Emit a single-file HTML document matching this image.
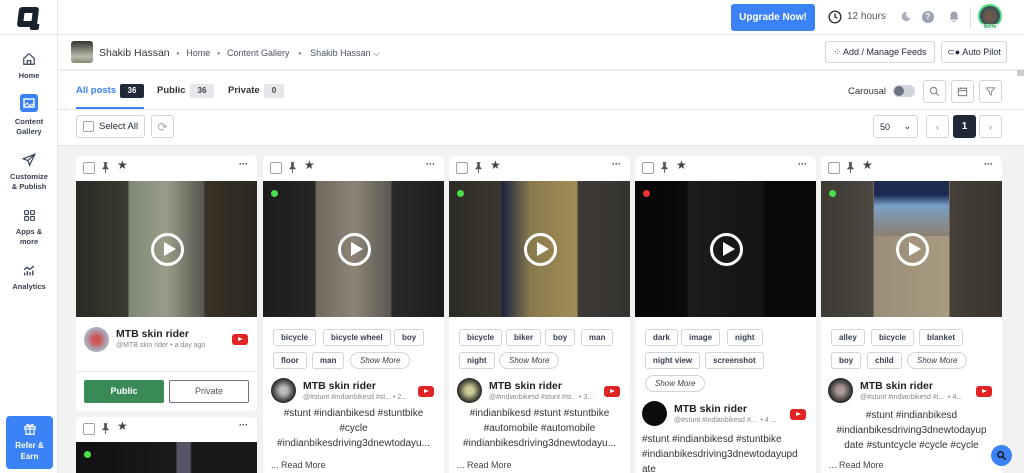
<!DOCTYPE html>
<html><head><meta charset="utf-8"><style>
*{box-sizing:border-box;margin:0;padding:0}
html,body{width:1024px;height:473px;overflow:hidden}
body{font-family:"Liberation Sans",sans-serif;background:#fff;position:relative;color:#1f2937}
.a{position:absolute}
.side{left:0;top:0;width:58px;height:473px;border-right:1px solid #e5e7eb;background:#fff}
.nav{position:absolute;left:0;width:58px;text-align:center;font-size:7.5px;font-weight:bold;color:#374151;line-height:10px}
.nav svg{display:block;margin:0 auto 5px}
.topb{left:58px;top:0;right:0;height:35px;border-bottom:1px solid #e5e7eb}
.crumb{left:58px;top:35px;right:0;height:36px;border-bottom:2px solid #eceef1}
.btn{position:absolute;border:1px solid #d1d5db;border-radius:3px;background:#fff;font-size:9px;display:flex;align-items:center;justify-content:center;color:#1f2937}
.gray{left:58px;top:145px;width:966px;height:328px;overflow:hidden;background:#f2f2f3;border-top:1px solid #e5e7eb}
.card{position:absolute;background:#fff;border-radius:6px;overflow:hidden;width:181px}
.ch{height:25px;position:relative}
.cb{position:absolute;left:7px;top:6px;width:12px;height:12px;border:1px solid #9ca3af;border-radius:2px;background:#fff}
.pin{position:absolute;left:25px;top:6px}
.star{position:absolute;left:41px;top:2px;font-size:12px;color:#444}
.dots{position:absolute;right:9px;top:3px;font-size:9px;font-weight:bold}
.img{position:absolute;left:0;top:25px;width:100%;height:136px;background:#111}
.play{position:absolute;left:50%;top:50%;width:33px;height:33px;margin:-16px 0 0 -16px;border:3px solid #fff;border-radius:50%}
.play:after{content:"";position:absolute;left:10px;top:6px;border-left:12px solid #fff;border-top:7.5px solid transparent;border-bottom:7.5px solid transparent}
.dot{position:absolute;left:8px;top:9px;width:7px;height:7px;border-radius:50%;background:#4ade4a}
.tag{position:absolute;height:17px;border:1px solid #d1d5db;border-radius:3px;font-size:8px;font-weight:bold;color:#374151;display:flex;align-items:center;padding:0 7px}
.sm{border-radius:9px;font-style:italic;font-weight:normal;padding:0 9px}
.av{position:absolute;width:25px;height:25px;border-radius:50%;background:#222}
.nm{position:absolute;font-size:10.5px;font-weight:bold;color:#222}
.sub{position:absolute;font-size:7px;color:#888;white-space:nowrap}
.yt{position:absolute;width:16px;height:11px;background:#e02424;border-radius:3px}
.yt:after{content:"";position:absolute;left:6px;top:3px;border-left:5px solid #fff;border-top:2.5px solid transparent;border-bottom:2.5px solid transparent}
.tx{position:absolute;left:0;width:181px;font-size:10px;color:#333;line-height:15px;text-align:center}
.rm{position:absolute;left:8px;font-size:9px;color:#444}
</style></head><body>
<svg width="0" height="0" style="position:absolute"><defs><symbol id="pn" viewBox="0 0 10 12"><path d="M3 0h4v1H6.5v4L8.5 7v1h-3v4h-1V8h-3V7l2-2V1H3z" fill="#555"/></symbol></defs></svg>

<div class="a side">
 <div class="a" style="left:18px;top:7px;width:20px;height:20px;border:6px solid #1a2230;border-radius:3px;transform:skewX(-7deg)"></div>
 <div class="a" style="left:30px;top:24px;width:9px;height:6px;background:#1a2230;transform:skewX(-7deg);border-radius:0 0 2px 2px"></div>
 <div class="a" style="left:0;top:34px;width:58px;border-top:1px solid #e5e7eb"></div>
 <div class="nav" style="top:52px"><svg width="14" height="14" viewBox="0 0 24 24" fill="none" stroke="#374151" stroke-width="2"><path d="M3 11l9-8 9 8v10H3z M9 21v-6h6v6"/></svg>Home</div>
 <div class="nav" style="top:94px"><svg width="18" height="18" viewBox="0 0 18 18"><rect width="18" height="18" rx="3" fill="#3b82f6"/><rect x="4" y="5" width="10" height="8" fill="none" stroke="#fff" stroke-width="1.4"/><path d="M4 12l3-3 3 3 2-2 2 2" stroke="#fff" fill="none"/></svg>Content<br>Gallery</div>
 <div class="nav" style="top:153px"><svg width="14" height="14" viewBox="0 0 24 24" fill="none" stroke="#374151" stroke-width="2"><path d="M22 2L2 10l8 3 3 8z M10 13l12-11"/></svg>Customize<br>&amp; Publish</div>
 <div class="nav" style="top:209px"><svg width="13" height="13" viewBox="0 0 24 24" fill="none" stroke="#374151" stroke-width="2"><rect x="3" y="3" width="7" height="7" rx="1"/><rect x="14" y="3" width="7" height="7" rx="1"/><rect x="3" y="14" width="7" height="7" rx="1"/><rect x="14" y="14" width="7" height="7" rx="1"/></svg>Apps &amp;<br>more</div>
 <div class="nav" style="top:264px"><svg width="14" height="13" viewBox="0 0 24 24" fill="none" stroke="#374151" stroke-width="2.5"><path d="M4 21v-5M9 21v-8M14 21v-6M19 21v-9M3 11l5-5 5 4 8-6"/></svg>Analytics</div>
 <div class="a" style="left:6px;top:416px;width:47px;height:53px;background:#3b82f6;border-radius:4px;color:#fff;font-size:8px;font-weight:bold;text-align:center;line-height:11px;padding-top:6px">
  <svg width="14" height="14" viewBox="0 0 24 24" fill="none" stroke="#fff" stroke-width="2" style="display:block;margin:0 auto 4px"><rect x="3" y="8" width="18" height="4"/><path d="M5 12v9h14v-9M12 8v13M12 8c-2-5-7-4-5-1 1 1 5 1 5 1zM12 8c2-5 7-4 5-1-1 1-5 1-5 1z"/></svg>Refer &amp;<br>Earn</div>
</div>

<div class="a topb">
 <div class="a" style="left:673px;top:4px;width:84px;height:27px;background:#3b82f6;border-radius:3px;color:#fff;font-size:10px;font-weight:bold;display:flex;align-items:center;justify-content:center">Upgrade Now!</div>
 <svg class="a" style="left:770px;top:10px" width="14" height="14" viewBox="0 0 24 24" fill="none" stroke="#333" stroke-width="2.4"><circle cx="12" cy="12" r="10"/><path d="M12 6v6l4 2"/></svg>
 <div class="a" style="left:789px;top:11px;font-size:10px;color:#555">12 hours</div>
 <svg class="a" style="left:842px;top:11px" width="11" height="11" viewBox="0 0 24 24"><path d="M15 2a10 10 0 1 0 8 14A9 9 0 0 1 15 2z" fill="#aab0bb"/></svg>
 <div class="a" style="left:864px;top:11px;width:12px;height:12px;border-radius:50%;background:#9ca3af;color:#fff;font-size:8px;font-weight:bold;text-align:center;line-height:12px">?</div>
 <svg class="a" style="left:890px;top:10px" width="12" height="13" viewBox="0 0 24 24"><path d="M12 2a7 7 0 0 0-7 7v6l-2 3h18l-2-3V9a7 7 0 0 0-7-7zM9 20a3 3 0 0 0 6 0z" fill="#9ca3af"/></svg>
 <div class="a" style="left:912px;top:7px;height:20px;border-left:1px solid #ddd"></div>
 <div class="a" style="left:920px;top:4px;width:24px;height:24px;border-radius:50%;border:2px solid #4ade80;border-bottom-color:#e5e7eb;background:radial-gradient(#6b5a4a 30%,#3a4a5a 70%)"></div>
 <div class="a" style="left:926px;top:24px;font-size:6px;font-weight:bold;color:#16a34a;background:#fff">60%</div>
</div>

<div class="a crumb">
 <div class="a" style="left:13px;top:6px;width:22px;height:22px;border-radius:3px;background:linear-gradient(#333,#bba 70%,#887)"></div>
 <div class="a" style="left:41px;top:12px;font-size:10.5px;color:#333;white-space:nowrap">Shakib Hassan <span style="color:#666;font-size:8px;margin:0 4px">•</span> <span style="font-size:9px;color:#4b5563">Home</span> <span style="color:#666;font-size:8px;margin:0 4px">•</span> <span style="font-size:9px;color:#4b5563">Content Gallery</span> <span style="color:#666;font-size:8px;margin:0 6px">•</span> <span style="font-size:9px;color:#4b5563">Shakib Hassan ⌵</span></div>
 <div class="btn" style="left:767px;top:6px;width:110px;height:22px">⁘ Add / Manage Feeds</div>
 <div class="btn" style="left:883px;top:6px;width:66px;height:22px">⊂● Auto Pilot</div>
</div>

<div class="a" style="left:76px;top:85px;font-size:9.5px;font-weight:bold;color:#3b82f6">All posts</div>
<div class="a" style="left:120px;top:84px;width:24px;height:14px;background:#1f2937;border-radius:2px;color:#fff;font-size:8px;font-weight:bold;text-align:center;line-height:14px">36</div>
<div class="a" style="left:76px;top:107px;width:68px;height:2px;background:#3b82f6"></div>
<div class="a" style="left:157px;top:85px;font-size:9.5px;font-weight:bold;color:#333">Public</div>
<div class="a" style="left:190px;top:84px;width:24px;height:14px;background:#e5e7eb;border-radius:2px;font-size:8px;font-weight:bold;text-align:center;line-height:14px;color:#444">36</div>
<div class="a" style="left:228px;top:85px;font-size:9.5px;font-weight:bold;color:#333">Private</div>
<div class="a" style="left:264px;top:84px;width:20px;height:14px;background:#e5e7eb;border-radius:2px;font-size:8px;font-weight:bold;text-align:center;line-height:14px;color:#444">0</div>
<div class="a" style="left:58px;top:109px;right:0;border-top:1px solid #e5e7eb"></div>
<div class="a" style="left:848px;top:86px;font-size:9.5px;color:#333">Carousal</div>
<div class="a" style="left:893px;top:85px;width:22px;height:12px;border-radius:6px;background:#d1d5db"><div style="margin:1px;width:10px;height:10px;border-radius:50%;background:#6b7280"></div></div>
<div class="btn" style="left:923px;top:80px;width:23px;height:23px"><svg width="11" height="11" viewBox="0 0 24 24" fill="none" stroke="#888" stroke-width="2.5"><circle cx="10" cy="10" r="7"/><path d="M15 15l6 6"/></svg></div>
<div class="btn" style="left:951px;top:80px;width:23px;height:23px"><svg width="11" height="11" viewBox="0 0 24 24" fill="none" stroke="#888" stroke-width="2.5"><rect x="3" y="5" width="18" height="16"/><path d="M3 10h18M8 3v4M16 3v4"/></svg></div>
<div class="btn" style="left:979px;top:80px;width:23px;height:23px"><svg width="11" height="11" viewBox="0 0 24 24" fill="none" stroke="#888" stroke-width="2"><path d="M3 4h18l-7 9v7l-4-2v-5z"/></svg></div>

<div class="btn" style="left:76px;top:115px;width:69px;height:23px;font-size:9.5px;justify-content:flex-start;padding-left:6px"><span style="width:11px;height:11px;border:1px solid #9ca3af;border-radius:2px;margin-right:5px"></span>Select All</div>
<div class="btn" style="left:151px;top:115px;width:23px;height:23px;color:#aaa;font-size:12px">⟳</div>
<div class="btn" style="left:873px;top:115px;width:45px;height:23px;font-size:9px;justify-content:space-between;padding:0 6px"><span>50</span><span>⌄</span></div>
<div class="btn" style="left:926px;top:115px;width:23px;height:23px;color:#888">‹</div>
<div class="a" style="left:953px;top:115px;width:23px;height:23px;background:#1f2937;border-radius:3px;color:#fff;font-size:10px;font-weight:bold;text-align:center;line-height:23px">1</div>
<div class="btn" style="left:979px;top:115px;width:23px;height:23px;color:#888">›</div>
<div class="a" style="left:1017px;top:70px;width:7px;height:6px;background:#ccc"></div>

<div class="a gray">
<!-- card 1 -->
<div class="card" style="left:18px;top:10px;height:255px">
 <div class="ch"><div class="cb"></div><svg class="pin" width="9" height="11"><use href="#pn"/></svg><span class="star">★</span><span class="dots">···</span></div>
 <div class="img" style="background:linear-gradient(90deg,#2a2a24 0,#3b3a30 29%,#7d8a72 29%,#9a9c8a 50%,#55554c 71%,#3a3226 71%,#2a2820 100%)"><div class="play"></div></div>
 <div class="av" style="left:8px;top:171px;background:radial-gradient(#c55 20%,#aab 60%)"></div>
 <div class="nm" style="left:40px;top:172px">MTB skin rider</div>
 <div class="sub" style="left:40px;top:186px">@MTB skin rider • a day ago</div>
 <div class="yt" style="left:156px;top:178px"></div>
 <div class="a" style="left:0;top:215px;width:181px;border-top:1px solid #e5e7eb"></div>
 <div class="a" style="left:8px;top:224px;width:80px;height:23px;background:#3a8a58;border-radius:2px;color:#fff;font-size:9px;font-weight:bold;text-align:center;line-height:23px">Public</div>
 <div class="a" style="left:93px;top:224px;width:80px;height:23px;border:1px solid #6b7280;border-radius:2px;color:#555;font-size:9px;text-align:center;line-height:21px">Private</div>
</div>
<div class="card" style="left:18px;top:271px;height:80px">
 <div class="ch"><div class="cb"></div><svg class="pin" width="9" height="11"><use href="#pn"/></svg><span class="star">★</span><span class="dots">···</span></div>
 <div class="img" style="background:linear-gradient(90deg,#111 0,#1a1a1a 55%,#556 56%,#556 63%,#181818 64%)"><div class="dot"></div></div>
</div>
<!-- card 2 -->
<div class="card" style="left:205px;top:10px;height:330px">
 <div class="ch"><div class="cb"></div><svg class="pin" width="9" height="11"><use href="#pn"/></svg><span class="star">★</span><span class="dots">···</span></div>
 <div class="img" style="background:linear-gradient(90deg,#1c1c1c 0,#262624 29%,#6e675c 29%,#8c8576 50%,#5a5650 71%,#2a2a28 71%,#1d1d1d 100%)"><div class="dot"></div><div class="play"></div></div>
 <div class="tag" style="left:10px;top:173px">bicycle</div><div class="tag" style="left:60px;top:173px">bicycle wheel</div><div class="tag" style="left:131px;top:173px">boy</div>
 <div class="tag" style="left:10px;top:196px">floor</div><div class="tag" style="left:49px;top:196px">man</div><div class="tag sm" style="left:87px;top:196px">Show More</div>
 <div class="av" style="left:8px;top:222px;background:radial-gradient(#bbb 20%,#222 70%)"></div>
 <div class="nm" style="left:40px;top:224px">MTB skin rider</div>
 <div class="sub" style="left:40px;top:238px">@#stunt #indianbikesd #st... • 2...</div>
 <div class="yt" style="left:155px;top:230px"></div>
 <div class="tx" style="top:250px">#stunt #indianbikesd #stuntbike<br>#cycle<br>#indianbikesdriving3dnewtodayu...</div>
 <div class="rm" style="top:304px">... Read More</div>
</div>
<!-- card 3 -->
<div class="card" style="left:391px;top:10px;height:330px">
 <div class="ch"><div class="cb"></div><svg class="pin" width="9" height="11"><use href="#pn"/></svg><span class="star">★</span><span class="dots">···</span></div>
 <div class="img" style="background:linear-gradient(90deg,#2c2a24 0,#3a382e 29%,#1a2240 29%,#8a7a4c 45%,#a08c55 71%,#3e3a36 71%,#353330 100%)"><div class="dot"></div><div class="play"></div></div>
 <div class="tag" style="left:10px;top:173px">bicycle</div><div class="tag" style="left:57px;top:173px">biker</div><div class="tag" style="left:96px;top:173px">boy</div><div class="tag" style="left:132px;top:173px">man</div>
 <div class="tag" style="left:10px;top:196px">night</div><div class="tag sm" style="left:50px;top:196px">Show More</div>
 <div class="av" style="left:8px;top:222px;background:radial-gradient(#cc9 20%,#222 70%)"></div>
 <div class="nm" style="left:40px;top:224px">MTB skin rider</div>
 <div class="sub" style="left:40px;top:238px">@#indianbikesd #stunt #st... • 3...</div>
 <div class="yt" style="left:155px;top:230px"></div>
 <div class="tx" style="top:250px">#indianbikesd #stunt #stuntbike<br>#automobile #automobile<br>#indianbikesdriving3dnewtodayu...</div>
 <div class="rm" style="top:304px">... Read More</div>
</div>
<!-- card 4 -->
<div class="card" style="left:577px;top:10px;height:330px">
 <div class="ch"><div class="cb"></div><svg class="pin" width="9" height="11"><use href="#pn"/></svg><span class="star">★</span><span class="dots">···</span></div>
 <div class="img" style="background:linear-gradient(90deg,#070707 0,#0a0a0a 29%,#1a1c1e 29%,#141414 71%,#0a0a0a 71%)"><div class="dot" style="background:#ef3333"></div><div class="play"></div></div>
 <div class="tag" style="left:10px;top:173px">dark</div><div class="tag" style="left:46px;top:173px">image</div><div class="tag" style="left:92px;top:173px">night</div>
 <div class="tag" style="left:10px;top:196px">night view</div><div class="tag" style="left:70px;top:196px">screenshot</div>
 <div class="tag sm" style="left:10px;top:219px">Show More</div>
 <div class="av" style="left:7px;top:245px;background:#0c0c0c"></div>
 <div class="nm" style="left:39px;top:247px">MTB skin rider</div>
 <div class="sub" style="left:39px;top:261px">@#stunt #indianbikesd #... &nbsp;• 4 ...</div>
 <div class="yt" style="left:155px;top:253px"></div>
 <div class="tx" style="top:276px;text-align:left;padding-left:7px">#stunt #indianbikesd #stuntbike<br>#indianbikesdriving3dnewtodayupd<br>ate</div>
</div>
<!-- card 5 -->
<div class="card" style="left:763px;top:10px;height:330px">
 <div class="ch"><div class="cb"></div><svg class="pin" width="9" height="11"><use href="#pn"/></svg><span class="star">★</span><span class="dots">···</span></div>
 <div class="img" style="background:linear-gradient(90deg,#3e3a34 0,#4a4640 29%,#9a8e78 29%,#a89a80 71%,#444038 71%,#3a362f 100%)"><div class="a" style="left:53px;top:0;width:75px;height:55px;background:linear-gradient(#1c2a50 25%,#7aa0c8 45%,#8a8070)"></div><div class="dot"></div><div class="play"></div></div>
 <div class="tag" style="left:10px;top:173px">alley</div><div class="tag" style="left:50px;top:173px">bicycle</div><div class="tag" style="left:98px;top:173px">blanket</div>
 <div class="tag" style="left:10px;top:196px">boy</div><div class="tag" style="left:46px;top:196px">child</div><div class="tag sm" style="left:86px;top:196px">Show More</div>
 <div class="av" style="left:7px;top:222px;background:radial-gradient(#a99 20%,#222 70%)"></div>
 <div class="nm" style="left:39px;top:224px">MTB skin rider</div>
 <div class="sub" style="left:39px;top:238px">@#stunt #indianbikesd #i... &nbsp;• 4...</div>
 <div class="yt" style="left:155px;top:230px"></div>
 <div class="tx" style="top:252px">#stunt #indianbikesd<br>#indianbikesdriving3dnewtodayup<br>date #stuntcycle #cycle #cycle</div>
 <div class="rm" style="top:304px">... Read More</div>
</div>
</div>
<div class="a" style="left:991px;top:445px;width:21px;height:21px;border-radius:50%;background:#3b82f6;display:flex;align-items:center;justify-content:center"><svg width="11" height="11" viewBox="0 0 24 24" fill="none" stroke="#111" stroke-width="3"><circle cx="10" cy="10" r="6"/><path d="M15 15l6 6"/></svg></div>
</body></html>
